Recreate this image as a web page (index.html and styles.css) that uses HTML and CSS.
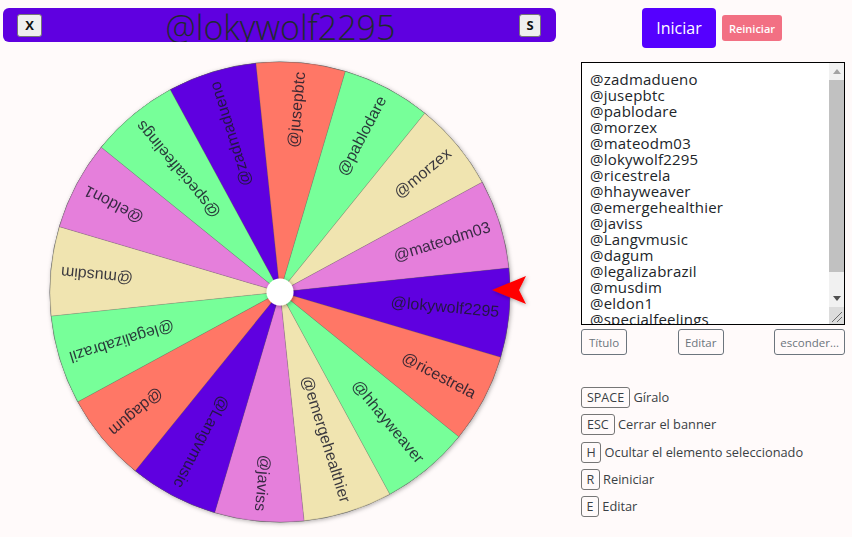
FILE: index.html
```html
<!DOCTYPE html>
<html lang="es">
<head>
<meta charset="utf-8">
<title>Ruleta</title>
<link rel="stylesheet" href="styles.css">
</head>
<body>
<div class="page">
  <main class="left">
    <header class="banner">
      <button class="key-btn key-x">X</button>
      <h1 class="winner">@lokywolf2295</h1>
      <button class="key-btn key-s">S</button>
    </header>
    <svg class="wheel" width="490" height="470" viewBox="-235 -235 490 470">
      <defs>
        <filter id="sh" x="-20%" y="-20%" width="140%" height="140%"><feDropShadow dx="1" dy="1" stdDeviation="2" flood-color="#000" flood-opacity=".35"/></filter>
      </defs>
      <circle class="rim" r="230"/>
      <g class="slices">
        <g transform="rotate(-107.25)"><path class="c1" d="M0 0L225.58 -44.87A230 230 0 0 1 225.58 44.87Z"/><text x="220" y="5">@zadmadueno</text></g>
        <g transform="rotate(-84.75)"><path class="c2" d="M0 0L225.58 -44.87A230 230 0 0 1 225.58 44.87Z"/><text x="221" y="5">@jusepbtc</text></g>
        <g transform="rotate(-62.25)"><path class="c3" d="M0 0L225.58 -44.87A230 230 0 0 1 225.58 44.87Z"/><text x="220" y="5">@pablodare</text></g>
        <g transform="rotate(-39.75)"><path class="c4" d="M0 0L225.58 -44.87A230 230 0 0 1 225.58 44.87Z"/><text x="220" y="5">@morzex</text></g>
        <g transform="rotate(-17.25)"><path class="c5" d="M0 0L225.58 -44.87A230 230 0 0 1 225.58 44.87Z"/><text x="220" y="5">@mateodm03</text></g>
        <g transform="rotate(5.25)"><path class="c1" d="M0 0L225.58 -44.87A230 230 0 0 1 225.58 44.87Z"/><text x="220" y="5">@lokywolf2295</text></g>
        <g transform="rotate(27.75)"><path class="c2" d="M0 0L225.58 -44.87A230 230 0 0 1 225.58 44.87Z"/><text x="220" y="5">@ricestrela</text></g>
        <g transform="rotate(50.25)"><path class="c3" d="M0 0L225.58 -44.87A230 230 0 0 1 225.58 44.87Z"/><text x="220" y="5">@hhayweaver</text></g>
        <g transform="rotate(72.75)"><path class="c4" d="M0 0L225.58 -44.87A230 230 0 0 1 225.58 44.87Z"/><text x="220" y="5">@emergehealthier</text></g>
        <g transform="rotate(95.25)"><path class="c5" d="M0 0L225.58 -44.87A230 230 0 0 1 225.58 44.87Z"/><text x="220" y="5">@javiss</text></g>
        <g transform="rotate(117.75)"><path class="c1" d="M0 0L225.58 -44.87A230 230 0 0 1 225.58 44.87Z"/><text x="220" y="5">@Langvmusic</text></g>
        <g transform="rotate(140.25)"><path class="c2" d="M0 0L225.58 -44.87A230 230 0 0 1 225.58 44.87Z"/><text x="220" y="5">@dagum</text></g>
        <g transform="rotate(162.75)"><path class="c3" d="M0 0L225.58 -44.87A230 230 0 0 1 225.58 44.87Z"/><text x="220" y="5">@legalizabrazil</text></g>
        <g transform="rotate(185.25)"><path class="c4" d="M0 0L225.58 -44.87A230 230 0 0 1 225.58 44.87Z"/><text x="220" y="5">@musdim</text></g>
        <g transform="rotate(207.75)"><path class="c5" d="M0 0L225.58 -44.87A230 230 0 0 1 225.58 44.87Z"/><text x="220" y="5">@eldon1</text></g>
        <g transform="rotate(230.25)"><path class="c3" d="M0 0L225.58 -44.87A230 230 0 0 1 225.58 44.87Z"/><text x="220" y="5">@specialfeelings</text></g>
      </g>
      <circle class="hub" r="13.5" filter="url(#sh)"/>
      <polygon class="pointer" points="212,-2 246,-16 239,-2 246,12" filter="url(#sh)"/>
    </svg>
  </main>
  <aside class="side">
    <div class="actions">
      <button class="btn-start">Iniciar</button>
      <button class="btn-reset">Reiniciar</button>
    </div>
    <div class="names-box">
      <textarea class="names" spellcheck="false">@zadmadueno
@jusepbtc
@pablodare
@morzex
@mateodm03
@lokywolf2295
@ricestrela
@hhayweaver
@emergehealthier
@javiss
@Langvmusic
@dagum
@legalizabrazil
@musdim
@eldon1
@specialfeelings


</textarea>
      <div class="scrollbar">
        <div class="sb-btn"><span class="arrow-up"></span></div>
        <div class="sb-track"><div class="sb-thumb"></div></div>
        <div class="sb-btn"><span class="arrow-down"></span></div>
        <div class="sb-corner">
          <svg width="15" height="17" viewBox="0 0 15 17"><path d="M3 15L13 5M8 15L13 10" stroke="#6b6b6b" stroke-width="1" fill="none"/></svg>
        </div>
      </div>
    </div>
    <div class="tools">
      <button class="btn-outline">Título</button>
      <button class="btn-outline">Editar</button>
      <button class="btn-outline">esconder...</button>
    </div>
    <ul class="shortcuts">
      <li><kbd>SPACE</kbd> Gíralo</li>
      <li><kbd>ESC</kbd> Cerrar el banner</li>
      <li><kbd class="k1">H</kbd> Ocultar el elemento seleccionado</li>
      <li><kbd class="k1">R</kbd> Reiniciar</li>
      <li><kbd class="k1">E</kbd> Editar</li>
    </ul>
  </aside>
</div>
</body>
</html>
```

FILE: styles.css
```css
* { box-sizing: border-box; }
html, body { height: 100%; }
body {
  margin: 0;
  background: #fffafa;
  font-family: "Open Sans", "Noto Sans", sans-serif;
  color: #212529;
  overflow: hidden;
}
.page { display: flex; align-items: flex-start; }
.left { width: 581px; flex: none; padding: 8px 0 0 3px; }
.banner {
  width: 553px;
  height: 34px;
  background: #5f00e0;
  border-radius: 6px;
  display: flex;
  align-items: center;
  justify-content: space-between;
  padding: 0 15px 0 14px;
  overflow: hidden;
}
.key-btn {
  width: 25px;
  height: 23px;
  padding: 0;
  font: 700 13px "Open Sans", sans-serif;
  color: #111;
  background: #efefef;
  border: 1px solid #767676;
  border-radius: 3px;
}
.key-s { width: 22px; }
.winner {
  margin: 0;
  font-family: "Open Sans", sans-serif;
  font-size: 34px;
  font-weight: 300;
  line-height: 40px;
  color: #1f2a30;
  position: relative;
  top: 2px;
}
.wheel { display: block; margin: 15px 0 0 42px; overflow: visible; }
.rim { fill: #555; stroke: #666; stroke-width: 1; filter: drop-shadow(1px 1px 2px rgba(0,0,0,.3)); }
.slices path { stroke: rgba(90,90,90,.35); stroke-width: .5; }
.c1 { fill: #5f00e0; }
.c2 { fill: #ff7766; }
.c3 { fill: #77ff99; }
.c4 { fill: #f0e4b0; }
.c5 { fill: #e57fdb; }
.slices text {
  font-family: "Liberation Sans", Arial, sans-serif;
  font-size: 16px;
  text-anchor: end;
  fill: #1a1a2a;
  opacity: .85;
}
.hub { fill: #fff; }
.pointer { fill: #f00; }
.side { width: 264px; flex: none; }
.actions {
  display: flex;
  align-items: center;
  gap: 6px;
  height: 40px;
  margin: 8px 0 14px 61px;
}
.btn-start {
  width: 74px;
  height: 40px;
  padding: 0;
  background: #5500ff;
  color: #fff;
  border: 0;
  border-radius: 4px;
  font: 16px "Open Sans", sans-serif;
}
.btn-reset {
  width: 60px;
  height: 26px;
  padding: 0;
  background: #f27083;
  color: #fff;
  border: 0;
  border-radius: 3px;
  font: 600 11px "Open Sans", sans-serif;
}
.names-box { position: relative; width: 264px; height: 263px; }
.names {
  display: block;
  width: 100%;
  height: 100%;
  margin: 0;
  padding: 8px 8px 0;
  background: #fff;
  border: 1px solid #000;
  border-radius: 0;
  color: #212529;
  font: 15px/16px "Open Sans", sans-serif;
  letter-spacing: .23px;
  overflow: hidden;
  resize: none;
  outline: 0;
}
.scrollbar {
  position: absolute;
  top: 1px;
  right: 1px;
  bottom: 1px;
  width: 15px;
  display: flex;
  flex-direction: column;
  background: #f1f1f1;
}
.sb-btn {
  height: 17px;
  flex: none;
  display: flex;
  align-items: center;
  justify-content: center;
}
.arrow-up, .arrow-down {
  width: 0;
  height: 0;
  border-left: 4.5px solid transparent;
  border-right: 4.5px solid transparent;
}
.arrow-up { border-bottom: 5px solid #a3a3a3; }
.arrow-down { border-top: 5px solid #505050; }
.sb-track { flex: 1; }
.sb-thumb { height: 192px; background: #c1c1c1; }
.sb-corner { height: 17px; flex: none; background: #dcdcdc; }
.sb-corner svg { display: block; }
.tools {
  display: flex;
  justify-content: space-between;
  margin-top: 4px;
}
.btn-outline {
  min-width: 46px;
  height: 26px;
  padding: 0 5px;
  background: transparent;
  border: 1px solid #6c757d;
  border-radius: 3px;
  color: #6c757d;
  font: 11.5px "Open Sans", sans-serif;
}
.shortcuts {
  list-style: none;
  margin: 32px 0 0;
  padding: 0;
  display: flex;
  flex-direction: column;
  gap: 6.25px;
  font-size: 12.8px;
  line-height: 21px;
  color: #3a3f44;
}
kbd {
  display: inline-block;
  height: 21px;
  padding: 0 5px;
  border: 1px solid #767676;
  border-radius: 3px;
  font: 12.5px/19px "Open Sans", sans-serif;
  color: #3a3f44;
}
.k1 { padding: 0 4.5px; }
```
